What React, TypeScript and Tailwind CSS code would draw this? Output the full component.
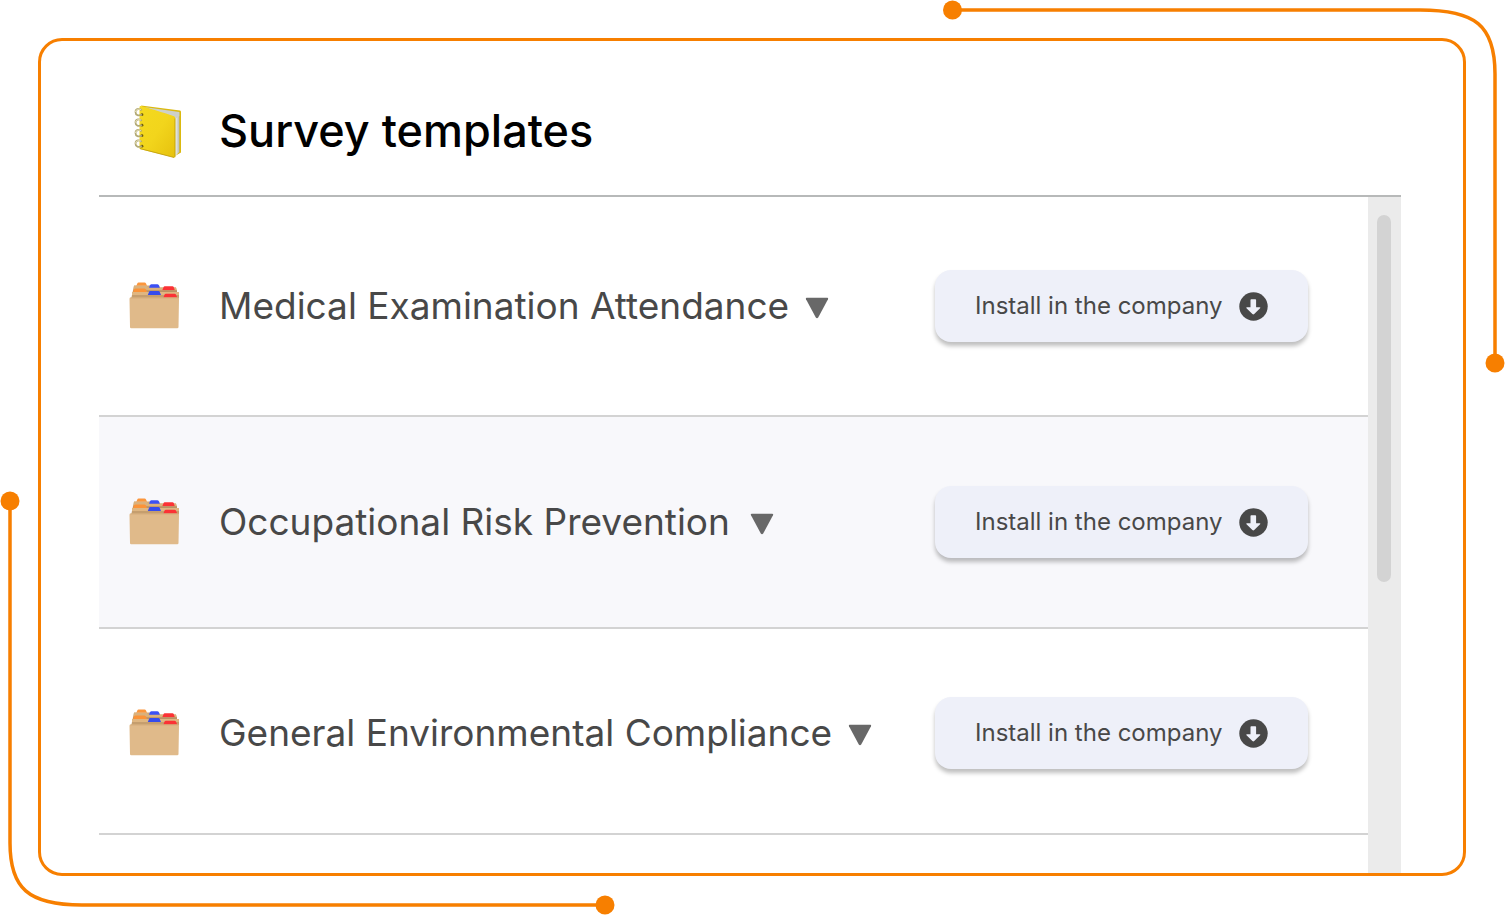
import React, { useState } from "react";

const templates = [
  { name: "Medical Examination Attendance", row: "pt-[73px] pb-[73px]", title: "gap-4" },
  { name: "Occupational Risk Prevention", row: "pt-[69px] pb-[69px] bg-[#f8f8fb]", title: "gap-5" },
  { name: "General Environmental Compliance", row: "pt-[68px] pb-[64px]", title: "gap-4" },
];

function NotebookIcon() {
  return (
    <svg viewBox="0 0 52 56" className="w-[52px] h-14 shrink-0" aria-hidden="true">
      <defs>
        <linearGradient id="cover" x1="0" y1="0" x2="1" y2="1">
          <stop offset="0" stopColor="#f4d91f" />
          <stop offset="0.5" stopColor="#f2d51c" />
          <stop offset="1" stopColor="#e6c10e" />
        </linearGradient>
        <linearGradient id="pages" x1="0" y1="0" x2="1" y2="0">
          <stop offset="0" stopColor="#a3a69d" />
          <stop offset="0.5" stopColor="#e4e6e0" />
          <stop offset="1" stopColor="#b9bcb3" />
        </linearGradient>
      </defs>
      <path d="M12 2.500 51 7.500q1 .2 1 1.200V49.500l-6 3.500z" fill="#dbb90f" />
      <path d="M44 10 50.300 9.500V49L46 53.500z" fill="url(#pages)" />
      <path d="M15 3.900 50.300 8.900V13L46 16 28 9z" fill="#cdd0c8" />
      <path d="M10.500 4.300q0-1.300 1.500-1.200C20 5.500 34 9.500 45 13.300q1.300.6 1.300 2V53.700q0 1.200-1.300.8L11.500 46.300q-1-.3-1-1.300z" fill="url(#cover)" />
      <path d="M45.800 15.500V54" stroke="#c9a70b" strokeWidth="0.800" />
      <path d="M10.800 45.500 45 54.500" fill="none" stroke="#bd990a" strokeWidth="0.800" />
      {[8.5, 19, 29.5, 40].map((y) => (
        <g key={y}>
          <circle cx="13" cy={y + 3.2} r="1.400" fill="#6d5b0c" />
          <path d={`M12.500 ${y - 1}C11 ${y - 3.5} 6.500 ${y - 3} 6.500 ${y + 0.5}s3 4 6.500 2.700`} fill="none" stroke="#b3aa74" strokeWidth="1.800" />
          <path d={`M12 ${y - 1.8}C10 ${y - 3} 7 ${y - 2.5} 6.500 ${y + 0.5}`} fill="none" stroke="#efe9c4" strokeWidth="0.900" />
        </g>
      ))}
    </svg>
  );
}

function FolderIcon() {
  return (
    <svg viewBox="0 0 52 48" className="w-[52px] h-12 shrink-0" aria-hidden="true">
      <path d="M5 3.500h25l1 2h16l2.500 12H2z" fill="#cda878" />
      <path d="M7.300 3.800 8.300 1.400q.3-.9 1.300-.9h6q1 0 1.400.9l1 2.400z" fill="#fb963c" />
      <path d="M5 3.800h13l1 1.700h28l1 3.500v8H4z" fill="#dab17c" />
      <path d="M20 5.800 21 3.200q.4-.9 1.400-.9h6q1 0 1.400.9l1 2.600z" fill="#3b50f4" />
      <path d="M33.300 8.200 34.500 5.200q.3-.9 1.300-.9h7.700q1 0 1.300.9l1 3z" fill="#fb3235" />
      <path d="M4 8.300h44v2.500H4z" fill="#ba9264" />
      <path d="M4 10.200 5.200 7.300q.4-.9 1.400-.9h8.600q1 0 1.500.9l1.500 2.900z" fill="#fb9338" />
      <path d="M3 10h47v4H3z" fill="#dfb681" />
      <path d="M18.800 13 20 10q.3-.9 1.300-.9h8.100q1 0 1.400.9l1.200 3z" fill="#354bed" />
      <path d="M3 13h47v3H3z" fill="#c59e6e" />
      <path d="M34.300 15.700 35.600 12.600q.3-.9 1.300-.9h8.600q1 0 1.400.9l1.500 3.100z" fill="#fb3235" />
      <path d="M.500 16.700q0-1.200 1.200-1.200h47.100q1.200 0 1.200 1.200L49.500 45q0 1.300-1.300 1.300H2.300Q1 46.300 1 45z" fill="#e0ba8a" />
      <path d="M1.500 15.900h48" stroke="#cfa877" strokeWidth="0.800" />
    </svg>
  );
}

function DownloadIcon() {
  return (
    <svg viewBox="0 0 29 29" className="w-[29px] h-[29px] shrink-0" aria-hidden="true">
      <circle cx="14.500" cy="14.500" r="14.200" fill="#484848" />
      <path
        d="M12.300 7.200h4q.8 0 .8.8v7.200h3.400q1.500 0 .6 1.100l-5.900 5.700q-.9.900-1.800 0l-5.900-5.700q-.9-1.100.6-1.100h3.400V8q0-.8.8-.8z"
        fill="#eef0f9"
      />
    </svg>
  );
}

function TemplateRow({ name, row, title }: { name: string; row: string; title: string }) {
  const [open, setOpen] = useState(false);
  return (
    <li className={`flex items-center justify-between pl-[30px] pr-[60px] border-b-2 border-[#d3d3d3] ${row}`}>
      <div className="flex items-center gap-[38px]">
        <FolderIcon />
        <button
          type="button"
          aria-expanded={open}
          onClick={() => setOpen(!open)}
          className={`flex items-center text-[37px] leading-[48px] text-[#484848] whitespace-nowrap ${title}`}
        >
          {name}
          <svg viewBox="0 0 24 22" className="w-6 h-[22px] mt-1" aria-hidden="true">
            <path d="M1.800.800h20.400q1.500 0 .8 1.400l-9.800 18.300q-1.200 1.500-2.400 0L1 2.200Q.3.800 1.800.800z" fill="#686868" />
          </svg>
        </button>
      </div>
      <button
        type="button"
        className="flex items-center justify-between w-[373px] h-[72px] shrink-0 px-10 rounded-2xl bg-[#eef0f9] text-[24px] text-[#484848] whitespace-nowrap shadow-[0_4px_4px_rgba(0,0,0,0.25)]"
      >
        Install in the company
        <DownloadIcon />
      </button>
    </li>
  );
}

export default function App() {
  return (
    <div className="relative flex min-h-screen bg-white pt-[38px] pb-[39px] pl-[38px] pr-[39px] font-['Inter',sans-serif]">
      <svg viewBox="0 0 563 373" className="absolute top-0 right-0 w-[563px] h-[373px]" aria-hidden="true">
        <path d="M10 10H478C533 10 553 25 553 74V363" fill="none" stroke="#f77f00" strokeWidth="3.500" />
        <circle cx="10.500" cy="10" r="9.500" fill="#f77f00" />
        <circle cx="553" cy="363" r="9.500" fill="#f77f00" />
      </svg>
      <svg viewBox="0 0 615 424" className="absolute bottom-0 left-0 w-[615px] h-[424px]" aria-hidden="true">
        <path d="M10 10V352C10 397 28 414 82 414H605" fill="none" stroke="#f77f00" strokeWidth="3.500" />
        <circle cx="10" cy="10" r="9.500" fill="#f77f00" />
        <circle cx="605" cy="414" r="9.500" fill="#f77f00" />
      </svg>

      <main className="flex flex-col grow pl-[58px] pr-[62px] border-3 border-[#f77f00] rounded-3xl">
        <header className="flex items-center gap-[38px] pt-[58px] pb-8 pl-[30px] border-b-2 border-[#b7b9b9]">
          <NotebookIcon />
          <h1 className="text-[45px] leading-[64px] font-medium text-black">Survey templates</h1>
        </header>
        <div className="flex grow">
          <ul className="grow">
            {templates.map((t) => (
              <TemplateRow key={t.name} {...t} />
            ))}
          </ul>
          <div className="w-[33px] shrink-0 pt-[18px] pl-[9px] bg-[#ebebeb]">
            <div className="w-3.5 h-[367px] rounded-full bg-[#d3d3d3]" />
          </div>
        </div>
      </main>
    </div>
  );
}
